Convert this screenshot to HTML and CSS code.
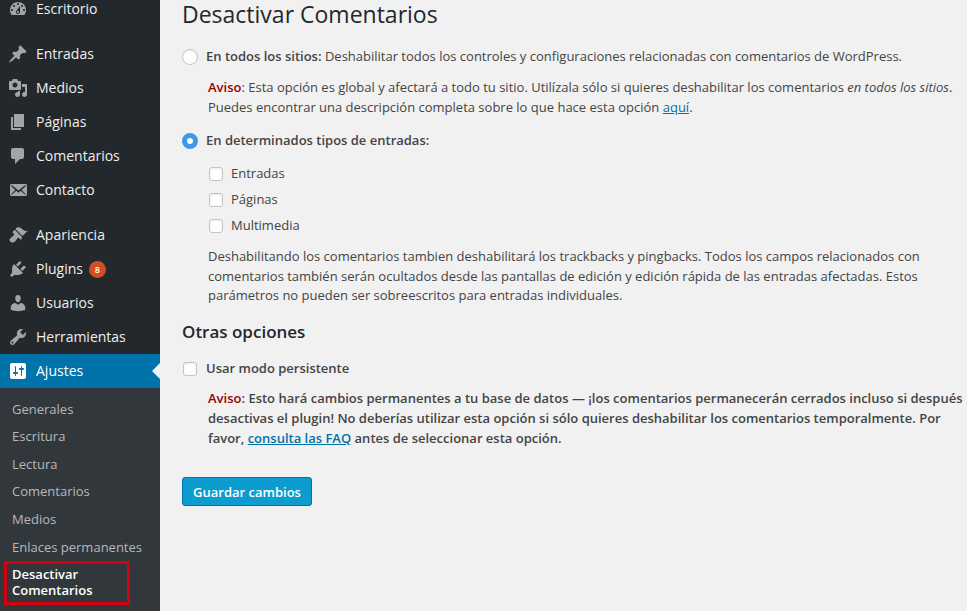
FILE: index.html
```html
<!DOCTYPE html>
<html lang="es">
<head>
<meta charset="utf-8">
<title>Desactivar Comentarios</title>
<link rel="stylesheet" href="styles.css">
</head>
<body>
<div class="layout">
  <nav class="sidebar">
    <ul class="menu">
      <li class="item first"><svg class="ico" viewBox="0 0 20 20"><path d="M3.76 16h12.48c1.1-1.37 1.76-3.11 1.76-5 0-4.42-3.58-8-8-8s-8 3.58-8 8c0 1.89.66 3.63 1.76 5zM10 4c.55 0 1 .45 1 1s-.45 1-1 1-1-.45-1-1 .45-1 1-1zM6 6c.55 0 1 .45 1 1s-.45 1-1 1-1-.45-1-1 .45-1 1-1zm8 0c.55 0 1 .45 1 1s-.45 1-1 1-1-.45-1-1 .45-1 1-1zm-5.37 5.55L12 7v6c0 1.1-.9 2-2 2s-2-.9-2-2c0-.57.24-1.08.63-1.45zM4 10c.55 0 1 .45 1 1s-.45 1-1 1-1-.45-1-1 .45-1 1-1zm12 0c.55 0 1 .45 1 1s-.45 1-1 1-1-.45-1-1 .45-1 1-1zm-5 3c0-.55-.45-1-1-1s-1 .45-1 1 .45 1 1 1 1-.45 1-1z"/></svg>Escritorio</li>
      <li class="item sep-a"><svg class="ico" viewBox="0 0 20 20"><path d="M10.44 3.02l1.82-1.82 6.36 6.35-1.83 1.82c-1.05-.68-2.48-.57-3.41.36l-.75.75c-.92.93-1.04 2.35-.35 3.41l-1.83 1.82-2.41-2.41-2.8 2.79c-.42.42-3.38 2.71-3.8 2.29s1.86-3.39 2.28-3.81l2.79-2.79L4.1 9.36l1.83-1.82c1.05.69 2.48.57 3.4-.36l.75-.75c.93-.92 1.05-2.35.36-3.41z"/></svg>Entradas</li>
      <li class="item"><svg class="ico" viewBox="0 0 20 20"><path d="M13 11V4c0-.55-.45-1-1-1h-1.67L9 1H5L3.67 3H2c-.55 0-1 .45-1 1v7c0 .55.45 1 1 1h10c.55 0 1-.45 1-1zM7 4.5c1.38 0 2.5 1.12 2.5 2.5S8.38 9.5 7 9.5 4.5 8.38 4.5 7 5.62 4.5 7 4.5zM14 6h5v10.5c0 1.38-1.12 2.5-2.5 2.5S14 17.88 14 16.5s1.12-2.5 2.5-2.5c.17 0 .34.02.5.05V9h-3V6zm-4 8.05V13h2v3.5c0 1.38-1.12 2.5-2.5 2.5S7 17.88 7 16.5 8.12 14 9.5 14c.17 0 .34.02.5.05z"/></svg>Medios</li>
      <li class="item"><svg class="ico" viewBox="0 0 20 20"><path d="M6 15V2h10v13H6zm-1 1h8v2H3V5h2v11z"/></svg>Páginas</li>
      <li class="item"><svg class="ico" viewBox="0 0 20 20"><path d="M5 2h9c1.1 0 2 .9 2 2v7c0 1.1-.9 2-2 2h-2l-5 5v-5H5c-1.1 0-2-.9-2-2V4c0-1.1.9-2 2-2z"/></svg>Comentarios</li>
      <li class="item"><svg class="ico" viewBox="0 0 20 20"><path d="M19 14.5v-9c0-.83-.67-1.5-1.5-1.5H3.49c-.83 0-1.5.67-1.5 1.5v9c0 .83.67 1.5 1.5 1.5H17.5c.83 0 1.5-.67 1.5-1.5zm-1.31-9.11c.33.33.15.67-.03.84L13.6 9.95l3.9 4.06c.12.14.2.36.06.51-.13.16-.43.15-.56.05l-4.37-3.73-2.14 1.95-2.13-1.95-4.37 3.73c-.13.1-.43.11-.56-.05-.14-.15-.06-.37.06-.51l3.9-4.06-4.06-3.72c-.18-.17-.36-.51-.03-.84s.67-.17.95.07l6.24 5.04 6.25-5.04c.28-.24.62-.4.95-.07z"/></svg>Contacto</li>
      <li class="item sep-b"><svg class="ico" viewBox="0 0 20 20"><path d="M14.48 11.06L7.41 3.99l1.5-1.5c.5-.56 2.3-.47 3.51.32 1.21.8 1.43 1.28 2.91 2.1 1.18.64 2.45 1.26 4.45.85zm-.71.71L6.7 4.7 4.93 6.47c-.39.39-.39 1.02 0 1.41l1.06 1.06c.39.39.39 1.03 0 1.42-.6.6-1.43 1.11-2.21 1.69-.35.26-.7.53-1.01.84C1.43 13.23.99 15.26 2.4 16.7c1.45 1.41 3.47.97 4.81-.37.31-.31.58-.66.84-1.01.58-.78 1.09-1.61 1.69-2.21.39-.39 1.02-.39 1.41 0l1.06 1.06c.39.39 1.02.39 1.41 0z"/></svg>Apariencia</li>
      <li class="item"><svg class="ico" viewBox="0 0 20 20"><path d="M13.11 4.36L9.87 7.6 8 5.73l3.24-3.24c.35-.34 1.05-.2 1.56.32.52.51.66 1.21.31 1.55zm-8 1.77l.91-1.12 9.01 9.01-1.19.84c-.71.71-2.63 1.16-3.82 1.16H6.14L4.9 17.26c-.59.59-1.54.59-2.12 0-.59-.58-.59-1.53 0-2.12l1.24-1.24v-3.88c0-1.13.4-3.19 1.09-3.89zm7.26 3.97l3.24-3.24c.34-.35 1.04-.21 1.55.31.52.51.66 1.21.31 1.55l-3.24 3.25z"/></svg>Plugins<span class="badge">8</span></li>
      <li class="item"><svg class="ico" viewBox="0 0 20 20"><path d="M10 9.25c-2.27 0-2.73-3.44-2.73-3.44C7 4.02 7.82 2 9.97 2c2.16 0 2.98 2.02 2.71 3.81 0 0-.41 3.44-2.68 3.44zm0 2.57L12.72 10c2.39 0 4.52 2.33 4.52 4.53v2.49s-3.65 1.13-7.24 1.13c-3.65 0-7.24-1.13-7.24-1.13v-2.49c0-2.25 1.94-4.48 4.47-4.48z"/></svg>Usuarios</li>
      <li class="item"><svg class="ico" viewBox="0 0 20 20"><path d="M16.68 9.77c-1.34 1.34-3.3 1.67-4.95.99l-5.41 6.52c-.99.99-2.59.99-3.58 0s-.99-2.59 0-3.57l6.52-5.42c-.68-1.65-.35-3.61.99-4.95 1.28-1.28 3.12-1.62 4.72-1.06l-2.89 2.89 2.82 2.82 2.86-2.87c.53 1.58.18 3.39-1.08 4.65zM3.81 16.21c.4.39 1.04.39 1.43 0 .4-.4.4-1.04 0-1.43-.39-.4-1.03-.4-1.43 0-.39.39-.39 1.03 0 1.43z"/></svg>Herramientas</li>
      <li class="item current"><svg class="ico" viewBox="0 0 20 20"><path d="M18 16V4c0-1.1-.9-2-2-2H4c-1.1 0-2 .9-2 2v12c0 1.1.9 2 2 2h12c1.1 0 2-.9 2-2zM8 11h1c.55 0 1 .45 1 1s-.45 1-1 1H8v1.5c0 .28-.22.5-.5.5s-.5-.22-.5-.5V13H6c-.55 0-1-.45-1-1s.45-1 1-1h1V5.5c0-.28.22-.5.5-.5s.5.22.5.5V11zm5-2h-1c-.55 0-1-.45-1-1s.45-1 1-1h1V5.5c0-.28.22-.5.5-.5s.5.22.5.5V7h1c.55 0 1 .45 1 1s-.45 1-1 1h-1v5.5c0 .28-.22.5-.5.5s-.5-.22-.5-.5V9z"/></svg>Ajustes</li>
    </ul>
    <ul class="submenu">
      <li class="sub">Generales</li>
      <li class="sub">Escritura</li>
      <li class="sub">Lectura</li>
      <li class="sub">Comentarios</li>
      <li class="sub">Medios</li>
      <li class="sub">Enlaces permanentes</li>
      <li class="sub-active">Desactivar Comentarios</li>
    </ul>
  </nav>
  <main class="content">
    <h1 class="title">Desactivar Comentarios</h1>
    <label class="option option-first"><input class="radio" type="radio" name="scope"><span><b>En todos los sitios:</b> Deshabilitar todos los controles y configuraciones relacionadas con comentarios de WordPress.</span></label>
    <p class="note note-first"><b class="warn">Aviso</b>: Esta opción es global y afectará a todo tu sitio. Utilízala sólo si quieres deshabilitar los comentarios <em>en todos los sitios</em>.<br>Puedes encontrar una descripción completa sobre lo que hace esta opción <a href="#">aquí</a>.</p>
    <label class="option option-second"><input class="radio" type="radio" name="scope" checked><span><b>En determinados tipos de entradas:</b></span></label>
    <ul class="types">
      <li><label class="type"><input class="check" type="checkbox">Entradas</label></li>
      <li><label class="type"><input class="check" type="checkbox">Páginas</label></li>
      <li><label class="type"><input class="check" type="checkbox">Multimedia</label></li>
    </ul>
    <p class="note note-types">Deshabilitando los comentarios tambien deshabilitará los trackbacks y pingbacks. Todos los campos relacionados con<br>comentarios también serán ocultados desde las pantallas de edición y edición rápida de las entradas afectadas. Estos<br>parámetros no pueden ser sobreescritos para entradas individuales.</p>
    <h2 class="subtitle">Otras opciones</h2>
    <label class="option option-persist"><input class="check" type="checkbox"><span><b>Usar modo persistente</b></span></label>
    <p class="note note-persist"><b class="warn">Aviso</b>: Esto hará cambios permanentes a tu base de datos — ¡los comentarios permanecerán cerrados incluso si después<br>desactivas el plugin! No deberías utilizar esta opción si sólo quieres deshabilitar los comentarios temporalmente. Por<br>favor, <a href="#">consulta las FAQ</a> antes de seleccionar esta opción.</p>
    <button class="save" type="button">Guardar cambios</button>
  </main>
</div>
</body>
</html>
```
FILE: styles.css
```css
* { box-sizing: border-box; }
html, body { margin: 0; padding: 0; height: 100%; overflow: hidden; }
body { background: #f1f1f1; color: #444; font-family: "Open Sans", "Liberation Sans", sans-serif; font-size: 13px; line-height: 19.5px; }
ul { list-style: none; margin: 0; padding: 0; }
p { margin: 0; }
.layout { display: flex; height: 611px; overflow: hidden; }
.sidebar { width: 160px; flex: none; background: #23282d; color: #eee; }
.item { position: relative; display: flex; align-items: center; height: 34px; font-size: 14px; line-height: 16px; padding-left: 36px; color: #eee; }
.ico { position: absolute; left: 8px; top: 7px; width: 20px; height: 20px; fill: #a0a5aa; }
.first { height: 18px; }
.first .ico { top: -1px; }
.sep-a { margin-top: 19px; }
.sep-b { margin-top: 11px; }
.current { background: #0073aa; color: #fff; }
.current .ico { fill: #fff; }
.current::after { content: ""; position: absolute; right: 0; top: 9px; border: 8px solid transparent; border-right-color: #f1f1f1; border-left-width: 0; }
.badge { display: inline-block; width: 17px; height: 17px; border-radius: 50%; background: #d54e21; color: #fff; font-size: 9px; line-height: 17px; text-align: center; font-weight: 600; margin-left: 6px; }
.submenu { background: #32373c; padding-top: 7.5px; height: 232px; }
.sub { height: 27.67px; line-height: 27.67px; padding-left: 12px; color: #b4b9be; font-size: 13px; }
.sub-active { margin: 0 30px 0 4px; width: 126px; height: 44px; border: 3px solid #d6000f; padding: 2px 5px; color: #fff; font-weight: 600; font-size: 13px; line-height: 16px; }
.content { flex: 1; min-width: 0; padding-left: 22px; white-space: nowrap; }
.title { margin: 0; font-size: 23px; font-weight: 400; line-height: 28px; color: #23282d; }
.option { display: flex; align-items: center; height: 20px; gap: 8px; }
.option b { font-weight: 600; }
.option-first { margin-top: 19px; }
.option-second { margin-top: 14px; }
.option-persist { margin-top: 14px; }
.radio { appearance: none; width: 16px; height: 16px; margin: 0; border-radius: 50%; background: #fff; border: 1px solid #c3c4c7; box-shadow: inset 0 1px 2px rgba(0,0,0,.08); flex: none; }
.radio:checked { background: #fff; border: 5px solid #3f97e8; box-shadow: none; }
.check { appearance: none; width: 14px; height: 14px; margin: 0 1px; border-radius: 3px; background: #fff; border: 1px solid #c3c4c7; box-shadow: inset 0 1px 2px rgba(0,0,0,.08); flex: none; }
.note { margin-left: 26px; }
.note-first { margin-top: 11px; }
.warn { color: #900; font-weight: 600; }
a { color: #0073aa; }
.types { margin: 13px 0 0 26px; display: flex; flex-direction: column; gap: 6px; }
.type { display: flex; align-items: center; height: 20px; gap: 7px; }
.note-types { margin-top: 11px; }
.subtitle { margin: 13px 0 0; font-size: 17px; font-weight: 600; line-height: 26px; color: #23282d; }
.note-persist { margin-top: 10.75px; font-weight: 600; line-height: 19.75px; }
.save { display: block; margin-top: 28.5px; width: 130px; height: 29px; padding: 0; background: #0d9ccf; border: 1px solid #0073aa; border-radius: 3px; color: #fff; font-family: inherit; font-size: 13px; font-weight: 600; }
```
